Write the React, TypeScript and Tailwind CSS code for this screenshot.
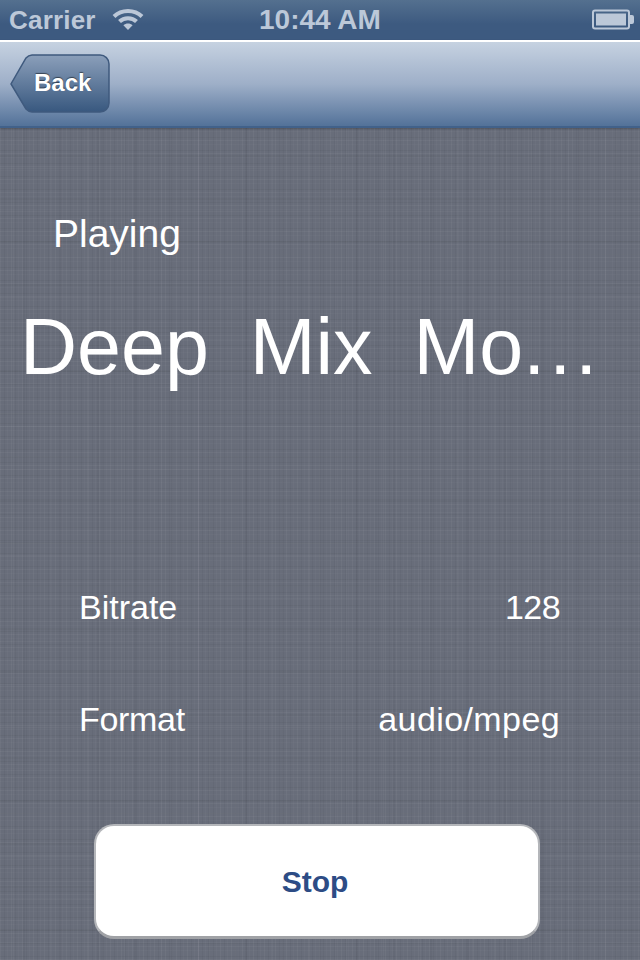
export default function App() {
  return (
    <div className="w-[640px] h-[960px] overflow-hidden flex flex-col font-['Liberation_Sans',Arial,sans-serif] relative bg-[#666b78]">
      <div className="h-[40px] flex items-center justify-between pl-[9px] pr-[6px] bg-gradient-to-b from-[#54708f] to-[#3d5a80] to-60% text-[#bcc8d8] font-bold relative">
        <div className="flex items-center gap-[16px]">
          <span className="text-[26px] leading-none tracking-[0.2px]">Carrier</span>
          <svg width="32" height="24" viewBox="0 0 32 24" fill="none" stroke="#bcc8d8" strokeWidth="4" className="-mt-[2px]">
            <path d="M2 9.5C9.5 2 22.5 2 30 9.5" />
            <path d="M7.5 14.5C12 10 20 10 24.5 14.5" />
            <path d="M16 23l-4.6-4.8c2.6-2.2 6.6-2.2 9.2 0z" fill="#bcc8d8" stroke="none" />
          </svg>
        </div>
        <span className="absolute left-[259px] top-[5px] text-[28px] leading-[30px]">10:44 AM</span>
        <svg width="42" height="22" viewBox="0 0 42 22" fill="none">
          <rect x="1" y="1.5" width="36" height="18" rx="2" stroke="#bcc8d8" strokeWidth="2" />
          <rect x="4" y="4.5" width="30" height="12" fill="#bcc8d8" />
          <path d="M38 6h2a2 2 0 0 1 2 2v5a2 2 0 0 1-2 2h-2z" fill="#bcc8d8" />
        </svg>
      </div>
      <div className="h-[88px] border-t-2 border-t-white border-b-2 border-b-[#41618a] bg-gradient-to-b from-[#c6d2e1] via-[#9eafc8] to-[#537299] flex items-center pl-[10px] shadow-[0_1px_2px_rgba(0,0,0,0.25)] z-10">
        <div className="relative w-[100px] h-[60px]">
          <svg width="100" height="60" viewBox="0 0 100 60" className="absolute inset-0">
            <defs>
              <linearGradient id="backFill" x1="0" y1="0" x2="0" y2="1">
                <stop offset="0" stopColor="#8b9fba" />
                <stop offset="1" stopColor="#38587f" />
              </linearGradient>
            </defs>
            <path d="M22 1H90a9 9 0 0 1 9 9V49a9 9 0 0 1-9 9H22a9 9 0 0 1-6-3L1 30 16 4a9 9 0 0 1 6-3z" fill="url(#backFill)" stroke="#3f5a7e" strokeWidth="1.5" />
          </svg>
          <span className="absolute left-[24px] top-[13px] text-[24px] leading-[32px] font-bold text-white [text-shadow:0_-1px_1px_rgba(0,0,0,0.5)]">Back</span>
        </div>
      </div>
      <main className="flex-1 flex flex-col text-white bg-[#686d7a] bg-[repeating-linear-gradient(90deg,rgba(255,255,255,0.04)_0_1px,transparent_1px_4px,rgba(0,0,0,0.035)_4px_5px,transparent_5px_7px,rgba(255,255,255,0.025)_7px_8px,transparent_8px_11px),repeating-linear-gradient(0deg,rgba(255,255,255,0.04)_0_1px,transparent_1px_3px,rgba(0,0,0,0.04)_3px_4px,transparent_4px_9px,rgba(255,255,255,0.02)_9px_10px,transparent_10px_13px),repeating-linear-gradient(90deg,transparent_0_13px,rgba(255,255,255,0.03)_13px_14px,transparent_14px_23px,rgba(0,0,0,0.035)_23px_25px,transparent_25px_37px),repeating-linear-gradient(0deg,transparent_0_17px,rgba(255,255,255,0.03)_17px_18px,transparent_18px_29px,rgba(0,0,0,0.03)_29px_31px,transparent_31px_43px),repeating-linear-gradient(90deg,transparent_0_61px,rgba(255,255,255,0.025)_61px_62px,transparent_62px_101px,rgba(0,0,0,0.02)_101px_103px,transparent_103px_137px)]">
        <div className="pl-[53px] pt-[84px] text-[39px] leading-[44px]">Playing</div>
        <div className="pl-[20px] pt-[45px] text-[79px] leading-[92px] whitespace-pre [word-spacing:-1.5px]">Deep  Mix  Mo<span className="tracking-[4px]">...</span></div>
        <div className="mt-[195px] pl-[79px] pr-[80px] flex justify-between text-[34px] leading-[38px]">
          <span>Bitrate</span>
          <span className="tracking-[-0.6px]">128</span>
        </div>
        <div className="mt-[74px] pl-[79px] pr-[80px] flex justify-between text-[34px] leading-[38px]">
          <span className="tracking-[-0.3px]">Format</span>
          <span className="tracking-[0.4px]">audio/mpeg</span>
        </div>
        <button className="ml-[94px] mt-[86px] w-[446px] h-[115px] pr-[4px] rounded-[20px] bg-white border-2 border-[#b4b6ba] border-b-[3px] border-b-[#a0a2a6] text-[#2d4c85] font-bold text-[30px]">Stop</button>
      </main>
    </div>
  );
}
